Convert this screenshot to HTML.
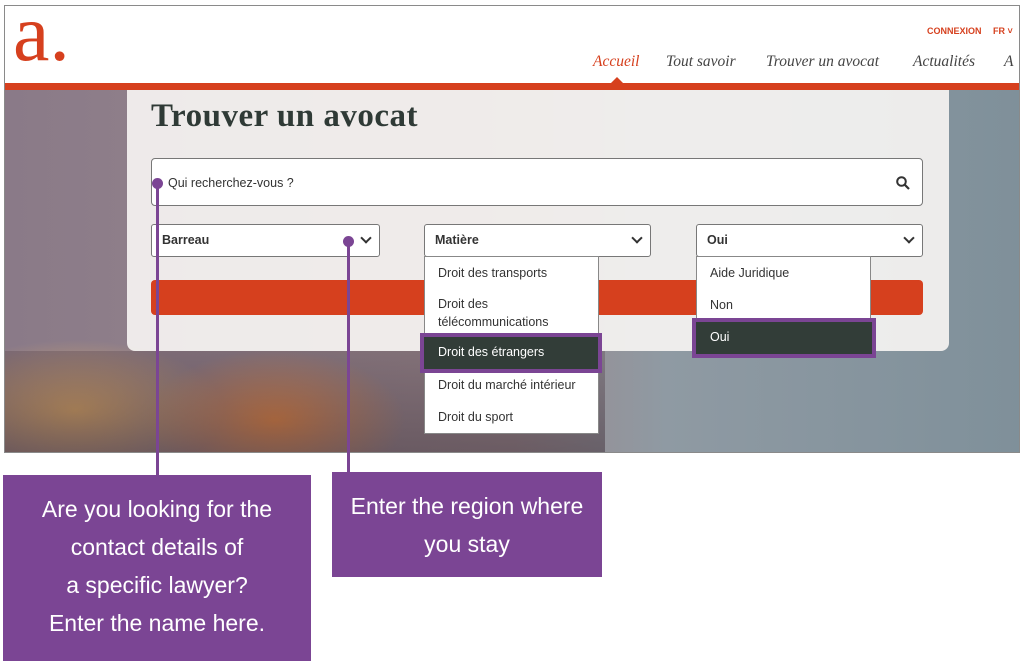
<!DOCTYPE html>
<html><head><meta charset="utf-8"><style>
*{margin:0;padding:0;box-sizing:border-box}
body{width:1024px;height:666px;background:#fff;position:relative;overflow:hidden;font-family:"Liberation Sans",sans-serif}
.abs{position:absolute}
.frame{left:4px;top:5px;width:1016px;height:448px;border:1px solid #8a8a8a;overflow:hidden;background:#fff}
.hero{left:0;top:84px;width:1016px;height:364px;background:
 radial-gradient(ellipse 130px 70px at 270px 330px,rgba(255,140,50,.85),transparent),
 radial-gradient(ellipse 150px 70px at 70px 320px,rgba(255,190,90,.75),transparent),
 linear-gradient(90deg,#8a7a88 0%,#9a8a8e 50%,#8f9aa3 65%,#7f909a 100%);}
.heroB{left:0;top:345px;width:600px;height:103px;background:linear-gradient(180deg,rgba(80,60,70,.3),rgba(60,45,55,.5))}
.bar{left:0;top:77px;width:1016px;height:7px;background:#d6401e}
.panel{left:122px;top:84px;width:822px;height:261px;background:rgba(248,246,244,.9);border-radius:0 0 8px 8px}
h1{position:absolute;left:151px;top:98px;font-family:"Liberation Serif",serif;font-weight:bold;font-size:33px;color:#2f3a36;letter-spacing:.5px}
.inp{background:#fff;border:1px solid #777;border-radius:4px;font-size:12.5px;color:#333}
.sel{background:#fff;border:1px solid #777;border-radius:3px;font-size:12.5px;font-weight:bold;color:#333;padding:8px 10px}
.chev{position:absolute;right:9px;top:9px;width:8px;height:8px;border-right:2px solid #333;border-bottom:2px solid #333;transform:rotate(45deg)}
.dd{background:#fff;border:1px solid #888;font-size:12.5px;color:#333}
.it{position:absolute;left:13px;font-size:12.5px;color:#333;white-space:nowrap}
.hl{background:#323d38;color:#fff;border:4px solid #7b4594}
.purple{background:#7b4594;color:#fff;font-family:"Liberation Sans",sans-serif;text-align:center;font-size:23px;line-height:38px}
.line{background:#7b4594;width:3px}
.nav{font-family:"Liberation Serif",serif;font-style:italic;font-size:15.5px;color:#444;top:47px}
</style></head><body>
<div class="abs frame">
 <div class="abs" style="left:8px;top:-14px;font-family:'Liberation Serif',serif;font-size:82px;color:#d6401e;line-height:1">a.</div>
 <div class="abs" style="left:922px;top:20px;font-size:9px;font-weight:bold;color:#d6401e">CONNEXION</div>
 <div class="abs" style="left:988px;top:20px;font-size:9px;font-weight:bold;color:#d6401e">FR ˅</div>
 <div class="abs nav" style="left:588px;color:#d6401e">Accueil</div>
 <div class="abs nav" style="left:661px">Tout savoir</div>
 <div class="abs nav" style="left:761px">Trouver un avocat</div>
 <div class="abs nav" style="left:908px">Actualités</div>
 <div class="abs nav" style="left:999px">A</div>
 <div class="abs" style="left:606px;top:65px;border:6px solid transparent;border-bottom-color:#d6401e"></div>
 <div class="abs hero"></div>
 <div class="abs heroB"></div>
 <div class="abs bar"></div>
 <div class="abs panel"></div>
</div>
<h1>Trouver un avocat</h1>
<div class="abs inp" style="left:151px;top:158px;width:772px;height:48px;padding:17px 16px">Qui recherchez-vous ?
 <svg class="abs" style="right:12px;top:17px" width="14" height="14" viewBox="0 0 14 14"><circle cx="5.5" cy="5.5" r="4.3" fill="none" stroke="#333" stroke-width="2"/><path d="M8.7 8.7L13 13" stroke="#333" stroke-width="2.2"/></svg></div>
<div class="abs sel" style="left:151px;top:224px;width:229px;height:33px">Barreau<span class="chev"></span></div>
<div class="abs sel" style="left:424px;top:224px;width:227px;height:33px">Matière<span class="chev"></span></div>
<div class="abs sel" style="left:696px;top:224px;width:227px;height:33px">Oui<span class="chev"></span></div>
<div class="abs" style="left:151px;top:280px;width:772px;height:35px;background:#d6401e;border-radius:4px"></div>
<div class="abs dd" style="left:424px;top:256px;width:175px;height:178px">
 <div class="it" style="top:9px">Droit des transports</div>
 <div class="it" style="top:40px">Droit des</div>
 <div class="it" style="top:58px">télécommunications</div>
 <div class="it" style="top:121px">Droit du marché intérieur</div>
 <div class="it" style="top:153px">Droit du sport</div>
</div>
<div class="abs hl" style="left:420px;top:333px;width:182px;height:40px;font-size:12.5px;padding:8px 14px">Droit des étrangers</div>
<div class="abs dd" style="left:696px;top:256px;width:175px;height:66px">
 <div class="it" style="top:9px">Aide Juridique</div><div class="it" style="top:41px">Non</div>
</div>
<div class="abs hl" style="left:692px;top:318px;width:184px;height:40px;font-size:12.5px;padding:8px 14px">Oui</div>
<div class="abs line" style="left:156px;top:183px;height:292px"></div>
<div class="abs" style="left:152px;top:178px;width:11px;height:11px;border-radius:50%;background:#7b4594"></div>
<div class="abs line" style="left:347px;top:241px;height:232px"></div>
<div class="abs" style="left:343px;top:236px;width:11px;height:11px;border-radius:50%;background:#7b4594"></div>
<div class="abs purple" style="left:3px;top:475px;width:308px;height:186px;padding-top:15px">Are you looking for the<br>contact details of<br>a specific lawyer?<br>Enter the name here.</div>
<div class="abs purple" style="left:332px;top:472px;width:270px;height:105px;padding-top:15px">Enter the region where<br>you stay</div>
</body></html>
